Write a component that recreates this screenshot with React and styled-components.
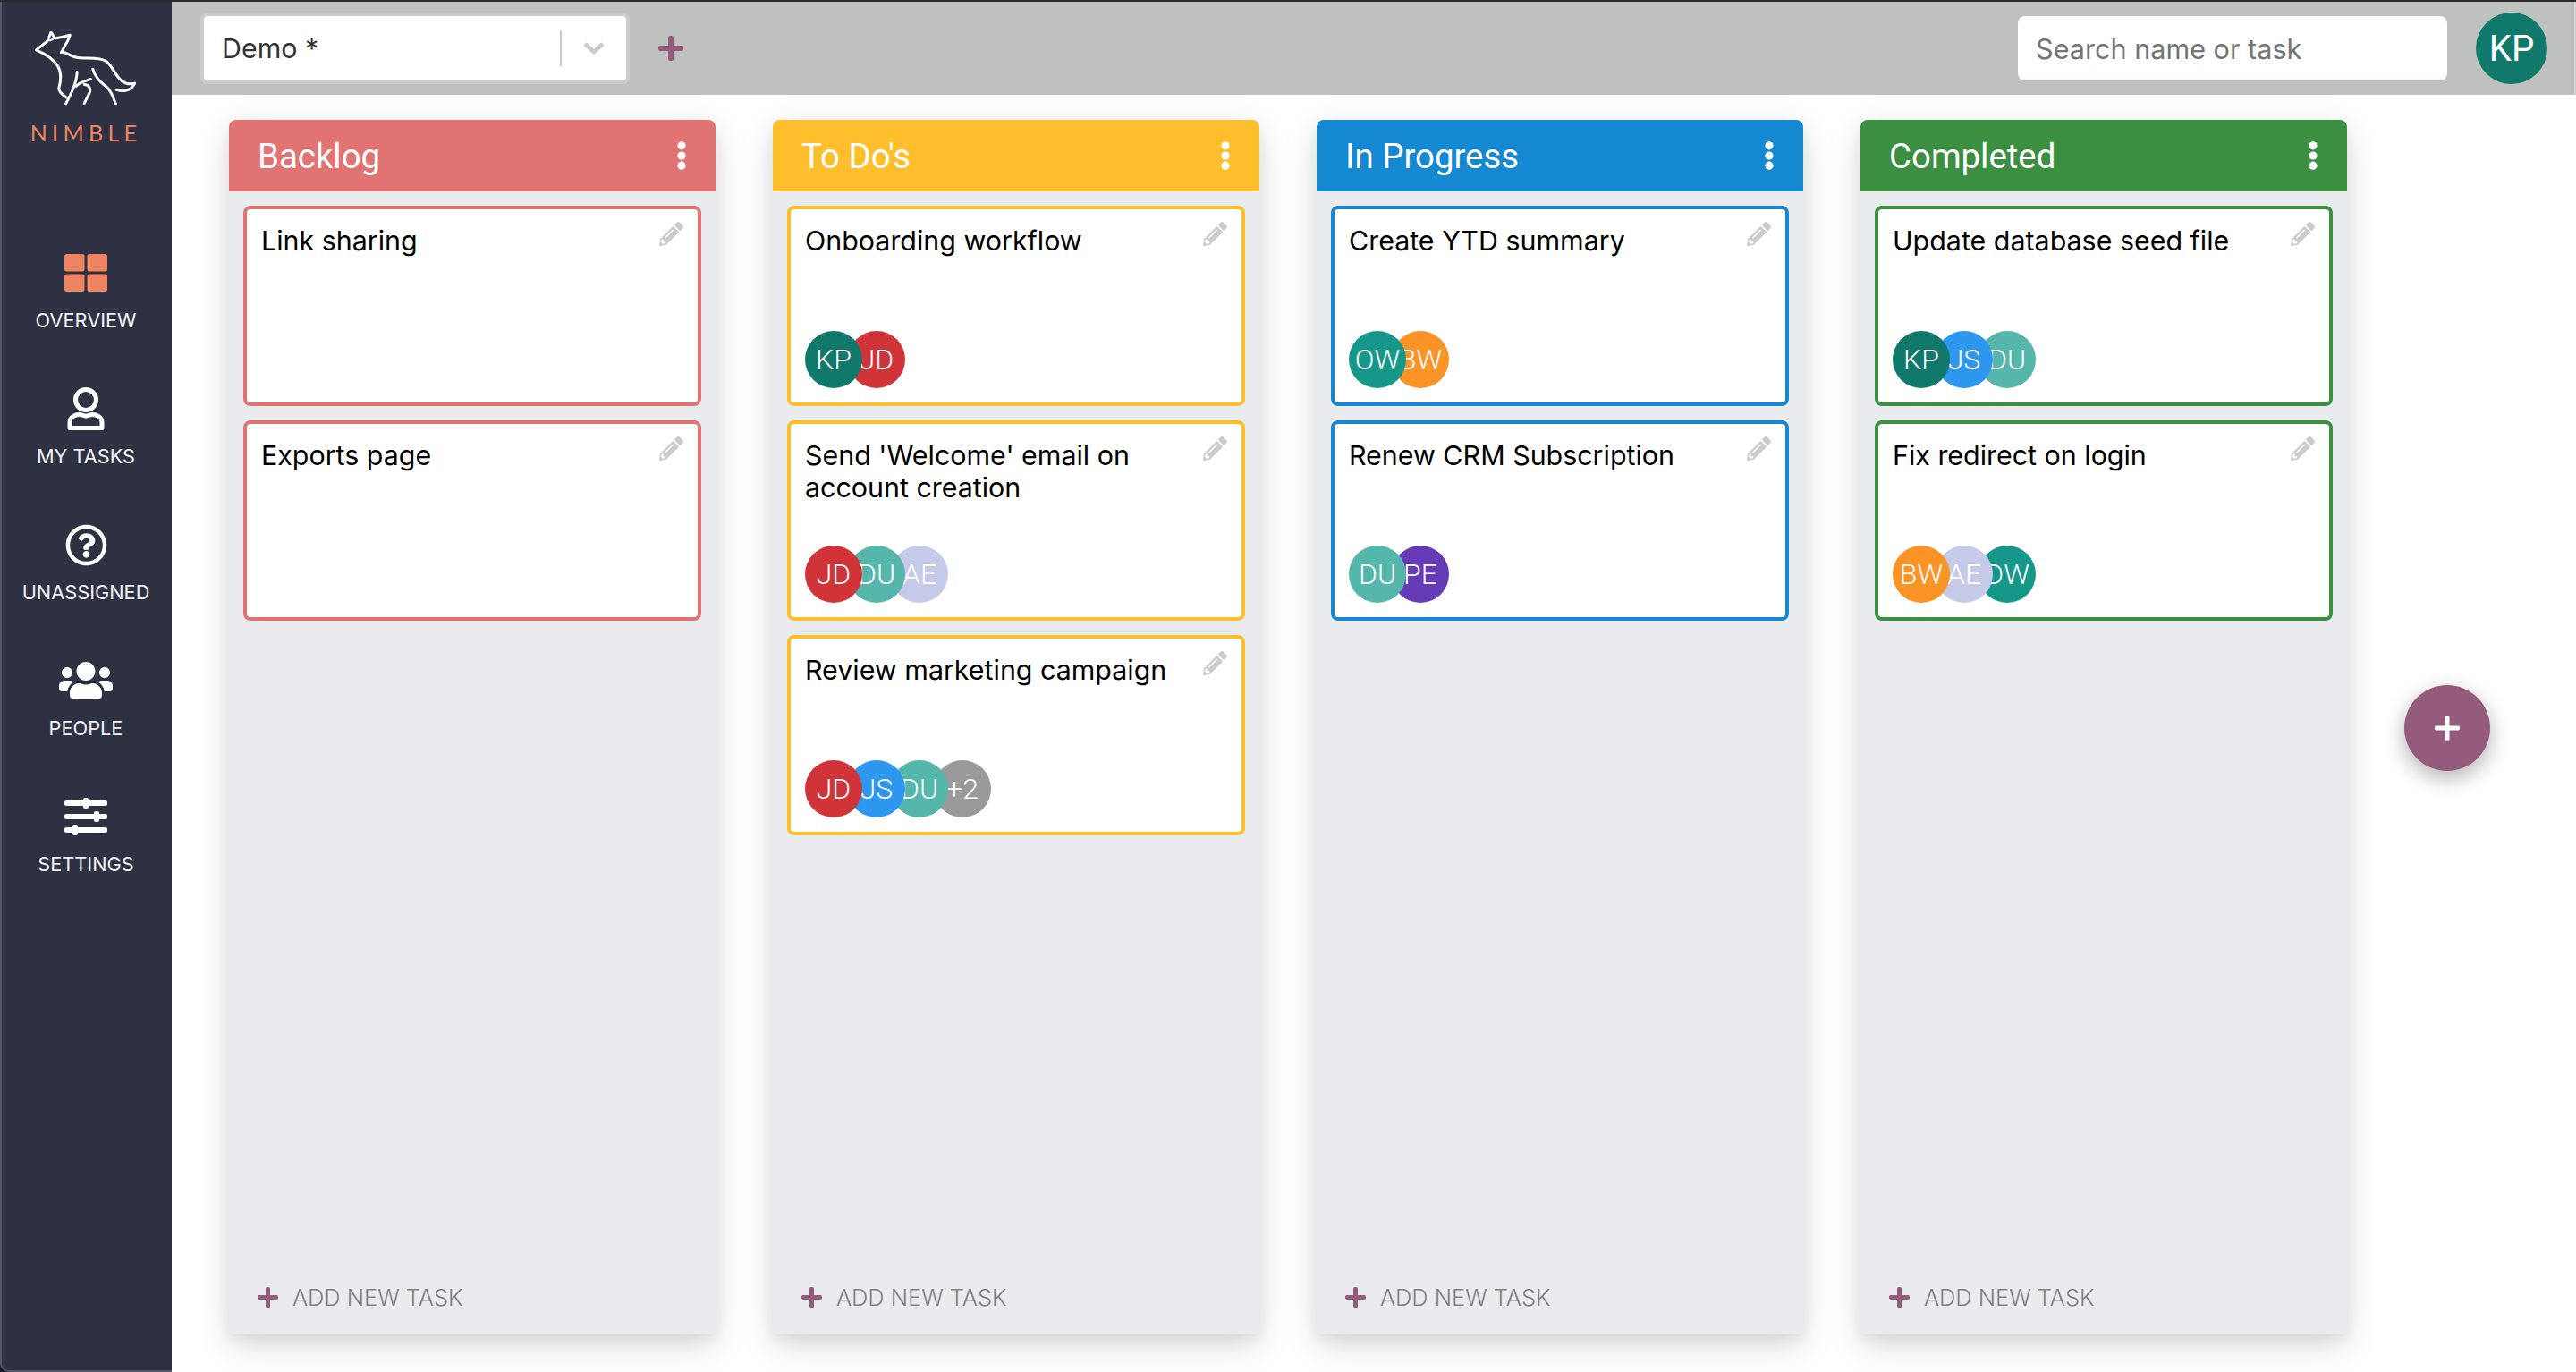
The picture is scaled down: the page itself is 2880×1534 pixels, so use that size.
import React from "react";
import styled, { createGlobalStyle } from "styled-components";
import { FaPencilAlt, FaRegQuestionCircle, FaUsers } from "react-icons/fa";

const PLUM = "#955b7d";

const AVATAR_COLORS = {
   KP: "#10796b",
   JD: "#d13438",
   DU: "#55b6ac",
   AE: "#c5cae9",
   JS: "#2d97f0",
   OW: "#15988a",
   BW: "#fb9426",
   PE: "#673ab7",
   DW: "#15988a",
   "+2": "#9a9a9a",
};

const COLUMNS = [
   {
      title: "Backlog",
      color: "#e27373",
      tasks: [
         { name: "Link sharing", people: [] },
         { name: "Exports page", people: [] },
      ],
   },
   {
      title: "To Do's",
      color: "#ffbf2c",
      tasks: [
         { name: "Onboarding workflow", people: ["KP", "JD"] },
         { name: "Send 'Welcome' email on account creation", people: ["JD", "DU", "AE"] },
         { name: "Review marketing campaign", people: ["JD", "JS", "DU", "+2"] },
      ],
   },
   {
      title: "In Progress",
      color: "#1488d0",
      tasks: [
         { name: "Create YTD summary", people: ["OW", "BW"] },
         { name: "Renew CRM Subscription", people: ["DU", "PE"] },
      ],
   },
   {
      title: "Completed",
      color: "#3c8f41",
      tasks: [
         { name: "Update database seed file", people: ["KP", "JS", "DU"] },
         { name: "Fix redirect on login", people: ["BW", "AE", "DW"] },
      ],
   },
];

const Fox = () => (
   <svg width="113" height="82" viewBox="118 105 340 247" fill="none" stroke="#fff" strokeWidth="9" strokeLinecap="round" strokeLinejoin="round">
      <path d="M207 176 C218 152 230 140 236 118 C215 122 198 128 185 128 L172 108 L160 138 L122 168 C150 180 178 195 195 222 C210 248 205 275 198 298 C200 312 212 320 224 328" />
      <path d="M207 176 C225 172 232 190 262 194 C295 198 335 190 358 206 C380 222 385 250 410 272 C425 283 440 284 454 280 C445 300 425 312 392 302" />
      <path d="M313 232 C320 262 345 280 362 295 C378 310 382 330 390 349" />
      <path d="M260 242 C258 280 240 315 222 349" />
      <path d="M306 266 C290 272 270 276 256 290" />
      <path d="M284 284 C298 284 308 296 302 312 L284 348" />
      <path d="M168 136 L178 132" strokeWidth="6" />
   </svg>
);

const Person = () => (
   <svg width="42" height="48" viewBox="0 0 42 48" fill="none" stroke="#fff" strokeWidth="5">
      <circle cx="21" cy="14" r="11.5" />
      <path d="M3 45.5 H39 V39 C39 33 33 30.5 28 30.5 C25 30.5 24 32 21 32 C18 32 17 30.5 14 30.5 C9 30.5 3 33 3 39 Z" strokeLinejoin="round" />
   </svg>
);

const Grid = () => (
   <svg width="48" height="42" viewBox="0 0 48 42" fill="#ec8560">
      <rect x="0" y="0" width="22.5" height="19.5" rx="2.5" />
      <rect x="25.5" y="0" width="22.5" height="19.5" rx="2.5" />
      <rect x="0" y="22.5" width="22.5" height="19.5" rx="2.5" />
      <rect x="25.5" y="22.5" width="22.5" height="19.5" rx="2.5" />
   </svg>
);

const Sliders = () => (
   <svg width="48" height="42" viewBox="0 0 48 42" fill="#fff">
      <rect x="0" y="3" width="48" height="6" rx="2" />
      <rect x="21" y="0" width="6" height="12" rx="2" />
      <rect x="0" y="18" width="48" height="6" rx="2" />
      <rect x="33" y="15" width="6" height="12" rx="2" />
      <rect x="0" y="33" width="48" height="6" rx="2" />
      <rect x="9" y="30" width="6" height="12" rx="2" />
   </svg>
);

const Dots = () => (
   <svg width="10" height="32" viewBox="0 0 10 32" fill="#fff">
      <circle cx="5" cy="4.8" r="4.6" />
      <circle cx="5" cy="16" r="4.6" />
      <circle cx="5" cy="27.2" r="4.6" />
   </svg>
);

const Plus = ({ size, thick, color }) => (
   <svg width={size} height={size} viewBox={`0 0 ${size} ${size}`} fill={color}>
      <rect x={(size - thick) / 2} y="0" width={thick} height={size} rx={thick / 3} />
      <rect x="0" y={(size - thick) / 2} width={size} height={thick} rx={thick / 3} />
   </svg>
);

const NAV = [
   { label: "OVERVIEW", icon: <Grid /> },
   { label: "MY TASKS", icon: <Person /> },
   { label: "UNASSIGNED", icon: <FaRegQuestionCircle size={47} color="#fff" /> },
   { label: "PEOPLE", icon: <FaUsers size={60} color="#fff" /> },
   { label: "SETTINGS", icon: <Sliders /> },
];

export default function App() {
   return (
      <>
         <GlobalStyle />
         <Page>
            <Sidebar>
               <Logo>
                  <Fox />
                  <Brand>NIMBLE</Brand>
               </Logo>

               <Nav>
                  {NAV.map(item => (
                     <NavItem key={item.label}>
                        <NavIcon>{item.icon}</NavIcon>
                        <NavLabel>{item.label}</NavLabel>
                     </NavItem>
                  ))}
               </Nav>
            </Sidebar>

            <Main>
               <TopBar>
                  <BoardSelect>
                     <BoardName>Demo *</BoardName>
                     <SelectDivider />
                     <svg width="24" height="14" viewBox="0 0 24 14" fill="none" stroke="#cccccc" strokeWidth="5">
                        <path d="M2 2 L12 11 L22 2" />
                     </svg>
                  </BoardSelect>

                  <AddBoard>
                     <Plus size={28} thick={6} color={PLUM} />
                  </AddBoard>

                  <Search placeholder="Search name or task" />
                  <UserAvatar>KP</UserAvatar>
               </TopBar>

               <Board>
                  {COLUMNS.map(column => (
                     <Column key={column.title}>
                        <ColumnHeader $color={column.color}>
                           <span>{column.title}</span>
                           <Dots />
                        </ColumnHeader>

                        <TaskList>
                           {column.tasks.map(task => (
                              <Card key={task.name} $color={column.color}>
                                 <CardTop>
                                    <TaskName>{task.name}</TaskName>
                                    <EditIcon><FaPencilAlt size={27} color="#cccccc" /></EditIcon>
                                 </CardTop>

                                 <People>
                                    {task.people.map((person, i) => (
                                       <Avatar key={person} $color={AVATAR_COLORS[person]} $z={task.people.length - i}>
                                          {person}
                                       </Avatar>
                                    ))}
                                 </People>
                              </Card>
                           ))}
                        </TaskList>

                        <AddTask>
                           <Plus size={23} thick={5} color={PLUM} />
                           <span>ADD NEW TASK</span>
                        </AddTask>
                     </Column>
                  ))}
               </Board>

               <Fab>
                  <Plus size={28} thick={5} color="#ffffff" />
               </Fab>
            </Main>
         </Page>
      </>
   );
}

const GlobalStyle = createGlobalStyle`
   html, body {
      margin: 0;
      padding: 0;
      background: #ffffff;
   }

   * {
      box-sizing: border-box;
   }
`;

const Page = styled.div`
   display: flex;
   width: 2880px;
   height: 1534px;
   overflow: hidden;
   border-top: 2px solid #2a2b2b;
   background: #14161f;
   font-family: Inter, "Liberation Sans", sans-serif;
`;

const Sidebar = styled.aside`
   display: flex;
   flex-direction: column;
   align-items: center;
   flex: 0 0 192px;
   padding-top: 33px;
   padding-right: 2px;
   border-left: 2px solid #555868;
   border-bottom: 2px solid #555868;
   border-bottom-left-radius: 10px;
   background: #2e3142;
   color: #ffffff;
`;

const Logo = styled.div`
   display: flex;
   flex-direction: column;
   align-items: center;
`;

const Brand = styled.div`
   margin-top: 16px;
   font-family: Lato, sans-serif;
   font-size: 25px;
   line-height: 30px;
   letter-spacing: 5.3px;
   color: #ec8560;
`;

const Nav = styled.nav`
   display: flex;
   flex-direction: column;
   gap: 59px;
   margin-top: 118px;
`;

const NavItem = styled.div`
   display: flex;
   flex-direction: column;
   align-items: center;
   height: 93px;
`;

const NavIcon = styled.div`
   display: flex;
   align-items: center;
   justify-content: center;
   height: 48px;
`;

const NavLabel = styled.div`
   margin-top: 13px;
   font-size: 21.76px;
   line-height: 32px;
   color: #f2f2f4;
`;

const Main = styled.main`
   position: relative;
   display: flex;
   flex-direction: column;
   flex: 1;
   min-width: 0;
   background: #ffffff;
`;

const TopBar = styled.header`
   display: flex;
   align-items: center;
   flex: 0 0 104px;
   padding: 0 30px 0 32px;
   border-right: 2px solid #d0d1d0;
   background: #bfc1bf;
`;

const BoardSelect = styled.div`
   display: flex;
   align-items: center;
   width: 480px;
   height: 80px;
   padding-left: 20px;
   padding-right: 24px;
   border: 4px solid #cccccc;
   border-radius: 8px;
   background: #ffffff;
`;

const BoardName = styled.div`
   flex: 1;
   font-size: 30.4px;
   color: #333333;
`;

const SelectDivider = styled.div`
   width: 2px;
   height: 40px;
   margin-right: 24px;
   background: #cccccc;
`;

const AddBoard = styled.div`
   display: flex;
   margin-left: 32px;
`;

const Search = styled.input`
   width: 480px;
   height: 72px;
   margin-left: auto;
   padding: 0 20px;
   border: 0;
   border-radius: 8px;
   outline: none;
   background: #ffffff;
   font-family: inherit;
   font-size: 30.6px;

   &::placeholder {
      color: #757575;
      opacity: 1;
   }
`;

const UserAvatar = styled.div`
   display: flex;
   align-items: center;
   justify-content: center;
   width: 80px;
   height: 80px;
   margin-left: 32px;
   border-radius: 50%;
   background: #10796b;
   color: #ffffff;
   font-family: Roboto, sans-serif;
   font-size: 40px;
`;

const Board = styled.section`
   display: flex;
   gap: 64px;
   flex: 1;
   min-height: 0;
   padding: 28px 0 42px 64px;
`;

const Column = styled.div`
   display: flex;
   flex-direction: column;
   width: 544px;
   border-radius: 8px;
   background: #eaebef;
   box-shadow: 0 8px 16px rgba(0, 0, 0, 0.06), 0 12px 40px rgba(0, 0, 0, 0.14);
`;

const ColumnHeader = styled.div`
   display: flex;
   align-items: center;
   justify-content: space-between;
   height: 80px;
   padding: 0 33px 0 32px;
   border-radius: 8px 8px 0 0;
   background: ${props => props.$color};
   color: #ffffff;
   font-family: Roboto, sans-serif;
   font-size: 38.4px;
   font-weight: 400;
`;

const TaskList = styled.div`
   display: flex;
   flex-direction: column;
   gap: 16px;
   flex: 1;
   padding: 16px;
`;

const Card = styled.article`
   display: flex;
   flex-direction: column;
   justify-content: space-between;
   height: 224px;
   padding: 16px;
   border: 4px solid ${props => props.$color};
   border-radius: 8px;
   background: #ffffff;
`;

const CardTop = styled.div`
   display: flex;
   justify-content: space-between;
   gap: 24px;
`;

const TaskName = styled.div`
   padding-top: 1px;
   font-size: 30.4px;
   line-height: 36px;
   color: #000000;
`;

const EditIcon = styled.div`
   flex: none;
   height: 27px;
   margin-top: -2px;
`;

const People = styled.div`
   display: flex;
`;

const Avatar = styled.div`
   position: relative;
   z-index: ${props => props.$z};
   display: flex;
   align-items: center;
   justify-content: center;
   flex: none;
   width: 64px;
   height: 64px;
   margin-right: -16px;
   border-radius: 50%;
   background: ${props => props.$color};
   color: #ffffff;
   font-family: Roboto, sans-serif;
   font-size: 32px;
   font-weight: 300;
`;

const AddTask = styled.div`
   display: flex;
   align-items: center;
   gap: 16px;
   height: 44px;
   margin-bottom: 20px;
   padding-left: 32px;
   color: #808080;
   font-size: 25.4px;
   font-weight: 300;
`;

const Fab = styled.div`
   position: absolute;
   top: 764px;
   left: 2496px;
   display: flex;
   align-items: center;
   justify-content: center;
   width: 96px;
   height: 96px;
   border-radius: 50%;
   background: ${PLUM};
   box-shadow: 0 8px 24px rgba(0, 0, 0, 0.3);
`;
